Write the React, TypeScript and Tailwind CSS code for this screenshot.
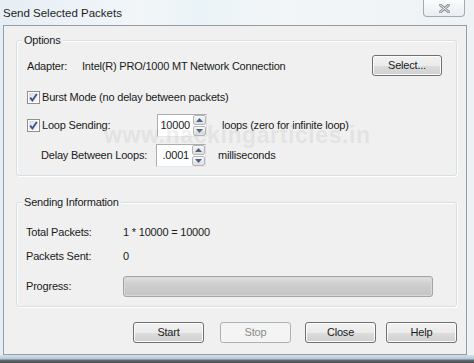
const Btn = ({ label, disabled = false }: { label: string; disabled?: boolean }) => (
  <div
    className={
      disabled
        ? "w-[71px] h-[21px] rounded-[3px] border border-[#adb2b5] bg-[#f4f4f4] text-[#8a8a8a] flex items-center justify-center"
        : "w-[71px] h-[21px] rounded-[3px] border border-[#707070] bg-[linear-gradient(#f2f2f2_0%,#ebebeb_50%,#dddddd_51%,#cfcfcf_100%)] shadow-[inset_0_0_0_1px_#fcfcfc] flex items-center justify-center"
    }
  >
    {label}
  </div>
);

const Check = () => (
  <div className="w-[13px] h-[13px] border border-[#8e8f8f] bg-white p-[1px] shrink-0">
    <div className="w-full h-full bg-[linear-gradient(135deg,#dcdcdc,#f7f7f7)] flex items-center justify-center">
      <svg width="9" height="9" viewBox="0 0 9 9">
        <path d="M1.2 4.6 L3.4 7.4 L7.8 1" fill="none" stroke="#3b4f92" strokeWidth="1.8" />
      </svg>
    </div>
  </div>
);

const Spin = ({ value }: { value: string }) => (
  <div className="w-[50px] h-[23px] flex border border-[#abadb3] border-r-[#dbdfe6] border-b-[#e3e9ef] bg-white">
    <div className="flex-1 flex items-center justify-end pr-[3px]">{value}</div>
    <div className="w-[13px] flex flex-col gap-[1px]">
      {[0, 1].map((i) => (
        <div
          key={i}
          className="flex-1 rounded-[2px] border border-[#b5b5b5] bg-[linear-gradient(#f7f7f7,#dedede)] flex items-center justify-center"
        >
          <svg width="7" height="4" viewBox="0 0 7 4">
            <path d={i === 0 ? "M0 4 L3.5 0 L7 4 Z" : "M0 0 L3.5 4 L7 0 Z"} fill="#4d6185" />
          </svg>
        </div>
      ))}
    </div>
  </div>
);

const Group = ({ title, h, children }: { title: string; h: string; children: React.ReactNode }) => (
  <div className={`relative w-[441px] ${h} rounded-[3px] border border-[#d5dfe5] shadow-[inset_1px_1px_0_#ffffff,1px_1px_0_#ffffff]`}>
    <span className="absolute left-[5px] -top-[8px] px-[2px] bg-[#f0f0f0] leading-[14px]">{title}</span>
    {children}
  </div>
);

export default function App() {
  return (
    <div className="w-[474px] h-[363px] overflow-hidden flex flex-col bg-[linear-gradient(90deg,#e6eef5_0%,#f2f6f9_30%,#eaf3f8_42%,#f3f6f8_60%,#eef2f5_100%)] font-['Liberation_Sans',Arial,sans-serif] text-[11px] tracking-[-0.2px] text-[#1b1b1b]">
      <div className="h-[25px] flex items-start justify-between shrink-0">
        <div className="pl-[3px] pt-[6px] text-[11.5px] tracking-normal text-[#1e1e1e] leading-[14px]">Send Selected Packets</div>
        <div className="mr-[9px] w-[42px] h-[17px] rounded-b-[4px] border border-t-0 border-[#a3acb5] bg-[linear-gradient(#fbfcfd,#e9edf1)] flex items-center justify-center">
          <svg width="11" height="9" viewBox="0 0 11 9">
            <path d="M1.5 1.2 L9.5 7.8 M9.5 1.2 L1.5 7.8" stroke="#8a8f95" strokeWidth="2.8" strokeLinecap="round" />
            <path d="M1.5 1.2 L9.5 7.8 M9.5 1.2 L1.5 7.8" stroke="#f4f6f8" strokeWidth="1" strokeLinecap="round" />
          </svg>
        </div>
      </div>

      <div className="ml-[3px] w-[464px] h-[330px] shrink-0 border border-[#959da5] bg-[#f0f0f0] pl-[12px] pt-[14px] relative">
        <Group title="Options" h="h-[136px]">
          <div className="pl-[10px] pr-[14px]">
            <div className="mt-[14px] h-[21px] flex items-center">
              <span className="w-[55px] pt-[2px]">Adapter:</span>
              <span className="flex-1 pt-[2px]">Intel(R) PRO/1000 MT Network Connection</span>
              <div className="w-[70px] h-[21px] rounded-[3px] border border-[#707070] bg-[linear-gradient(#f2f2f2_0%,#ebebeb_50%,#dddddd_51%,#cfcfcf_100%)] shadow-[inset_0_0_0_1px_#fcfcfc] flex items-center justify-center">
                Select...
              </div>
            </div>
            <div className="mt-[13px] h-[16px] flex items-center gap-[2px]">
              <Check />
              <span>Burst Mode (no delay between packets)</span>
            </div>
            <div className="mt-[9px] h-[23px] flex items-center">
              <Check />
              <span className="ml-[2px] w-[115px]">Loop Sending:</span>
              <Spin value="10000" />
              <span className="ml-[15px]">loops (zero for infinite loop)</span>
            </div>
            <div className="mt-[7px] h-[23px] flex items-center">
              <span className="ml-[14px] w-[115px]">Delay Between Loops:</span>
              <Spin value=".0001" />
              <span className="ml-[12px]">milliseconds</span>
            </div>
          </div>
        </Group>

        <div className="mt-[26px]">
          <Group title="Sending Information" h="h-[105px]">
            <div className="pl-[9px]">
              <div className="mt-[22px] h-[14px] flex items-center">
                <span className="w-[97px]">Total Packets:</span>
                <span>1 * 10000 = 10000</span>
              </div>
              <div className="mt-[10px] h-[14px] flex items-center">
                <span className="w-[97px]">Packets Sent:</span>
                <span>0</span>
              </div>
              <div className="mt-[13px] h-[21px] flex items-center">
                <span className="w-[97px]">Progress:</span>
                <div className="w-[310px] h-[21px] rounded-[3px] border border-[#a5a5a5] bg-[linear-gradient(#e2e2e2_0%,#cfcfcf_35%,#c4c4c4_100%)] shadow-[inset_0_0_0_1px_#d8d8d8]" />
              </div>
            </div>
          </Group>
        </div>

        <div className="mt-[15px] w-[441px] flex justify-end">
          <Btn label="Start" />
          <div className="ml-[16px]">
            <Btn label="Stop" disabled />
          </div>
          <div className="ml-[14px]">
            <Btn label="Close" />
          </div>
          <div className="ml-[10px]">
            <Btn label="Help" />
          </div>
        </div>

        <div className="absolute left-[100px] top-[92px] text-[23px] font-bold tracking-[0.6px] text-[rgba(175,175,175,0.2)] pointer-events-none">
          www.hackingarticles.in
        </div>
      </div>

      <div className="flex-1 bg-[linear-gradient(#d3e1ec_0%,#b9c9d6_45%,#5c636b_70%,#4a4f55_100%)]" />
    </div>
  );
}
